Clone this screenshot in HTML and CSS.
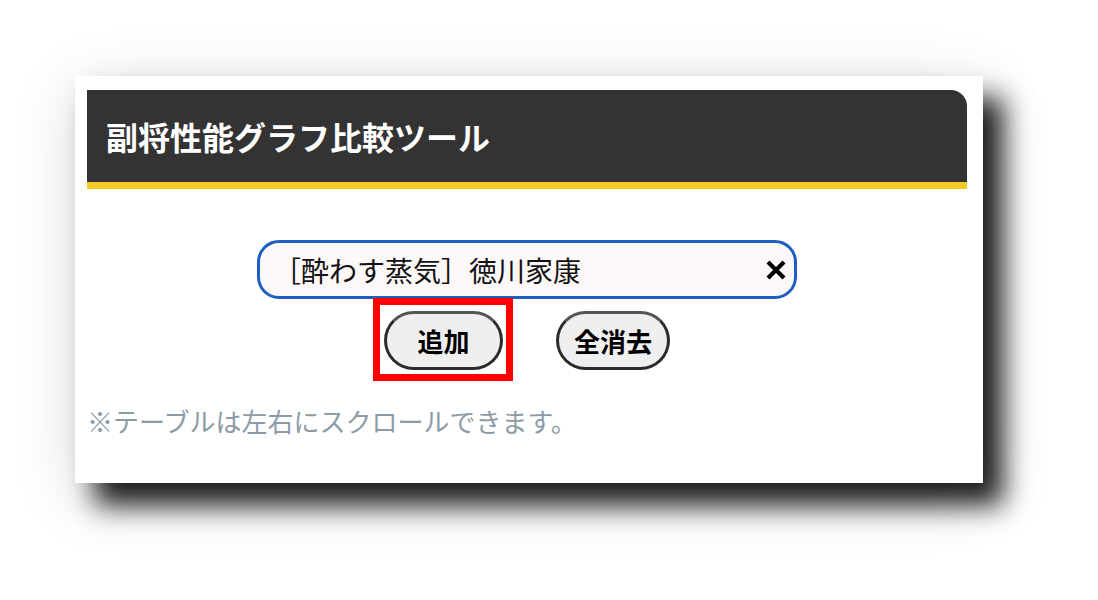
FILE: index.html
```html
<!DOCTYPE html>
<html lang="ja">
<head>
<meta charset="utf-8">
<title>副将性能グラフ比較ツール</title>
<link rel="stylesheet" href="styles.css">
</head>
<body>
<div class="card">
  <div class="header">
    <h1 class="title">副将性能グラフ比較ツール</h1>
  </div>
  <div class="search">
    <div class="input">
      <span class="input-text">［酔わす蒸気］徳川家康</span>
      <svg class="clear" viewBox="0 0 22 22" width="22" height="22" aria-hidden="true">
        <path d="M3 3 L19 19 M19 3 L3 19" stroke="#000" stroke-width="4.2" stroke-linecap="butt" fill="none"/>
      </svg>
    </div>
  </div>
  <div class="actions">
    <span class="highlight"><button class="btn btn-add">追加</button></span>
    <button class="btn btn-clear">全消去</button>
  </div>
  <p class="note">※テーブルは左右にスクロールできます。</p>
</div>
</body>
</html>
```

FILE: styles.css
```css
html, body {
  margin: 0;
  padding: 0;
  background: #ffffff;
}
body {
  font-family: "Noto Sans CJK JP", "Noto Sans", sans-serif;
  overflow: hidden;
  height: 600px;
}
.card {
  margin: 76px 0 0 75px;
  width: 908px;
  height: 407px;
  box-sizing: border-box;
  padding: 14px 16px 0 12px;
  background: #ffffff;
  box-shadow: 0 12px 60px rgba(0, 0, 0, 0.14), 20px 22px 26px rgba(0, 0, 0, 0.88);
}
.header {
  height: 92px;
  background: #333333;
  border-top-right-radius: 16px;
  border-bottom: 7px solid #f6c824;
  display: flex;
  align-items: center;
  padding-left: 19px;
}
.title {
  margin: 0;
  color: #ffffff;
  font-size: 32px;
  font-weight: 700;
  line-height: 1;
  letter-spacing: 0;
}
.search {
  margin-top: 51px;
  display: flex;
  justify-content: center;
}
.input {
  width: 540px;
  height: 59px;
  box-sizing: border-box;
  border: 3px solid #1c5ec2;
  border-radius: 22px;
  background: #fdf8f8;
  display: flex;
  align-items: center;
  justify-content: space-between;
  padding: 0 7px 0 13px;
}
.input-text {
  font-size: 28px;
  color: #111111;
  line-height: 1;
}
.clear {
  display: block;
}
.actions {
  margin-top: 12px;
  display: flex;
  justify-content: center;
  gap: 53px;
}
.highlight {
  position: relative;
  display: block;
}
.highlight::after {
  content: "";
  position: absolute;
  top: -13px;
  left: -11px;
  right: -10px;
  bottom: -11px;
  border: 7px solid #ff0000;
  pointer-events: none;
}
.btn {
  display: block;
  height: 59px;
  box-sizing: border-box;
  border: 3px solid #2b2b2b;
  border-top-color: #555555;
  border-radius: 30px;
  background: #efefef;
  font-family: "Noto Sans CJK JP", "Noto Sans", sans-serif;
  font-size: 26px;
  font-weight: 700;
  color: #000000;
  padding: 0;
  line-height: 1;
}
.btn-add {
  width: 119px;
}
.btn-clear {
  width: 114px;
}
.note {
  margin: 33px 0 0 0;
  font-size: 26px;
  line-height: 1.4;
  color: #8c9ba5;
}
```
